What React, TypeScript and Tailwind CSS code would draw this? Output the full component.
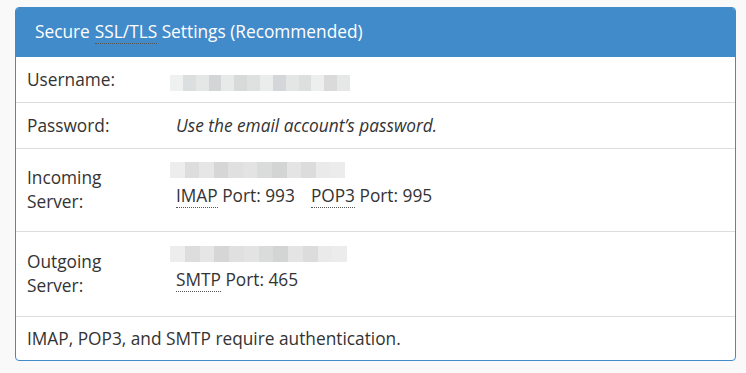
import React from "react";

const blurA = ["#eef0f0", "#d9dcdc", "#e3e4e4", "#cfd2d2", "#e6e7e7", "#d4d6d6", "#dcdede", "#e9eaea", "#d0d3d6", "#e2e3e3", "#dadcdc", "#eceded", "#d6d6d6", "#e4e5e5"];
const blurB = ["#ececec", "#dadada", "#e4e4e4", "#d2d2d2", "#dddddd", "#e0e0e0", "#d6d8d8", "#cfd1d1", "#e2e2e2", "#d9d9d9", "#e8e8e8", "#eaeaea"];

// pixelated stand-in for the redacted host names
function Blur({ colors, width }: { colors: string[]; width: number }) {
  return (
    <div className="flex h-[16px] opacity-90 -ml-[6px]" style={{ width }}>
      {colors.map((c, i) => (
        <div key={i} className="flex-1" style={{ backgroundColor: c }} />
      ))}
    </div>
  );
}

function Abbr({ children }: { children: React.ReactNode }) {
  return (
    <abbr className="no-underline border-b border-dotted border-[#555] cursor-help">
      {children}
    </abbr>
  );
}

function Row({ label, children, className = "" }: any) {
  return (
    <div className={"flex items-center border-t border-[#dddddd] " + className}>
      <div className="w-[160px] shrink-0 pl-[11px]">{label}</div>
      <div className="flex-1">{children}</div>
    </div>
  );
}

export default function App() {
  return (
    <div
      className="w-[746px] h-[373px] bg-[#f9f9f9] pt-[7px] pl-[15px] text-[#333333] text-[17.3px] leading-[24px]"
      style={{ fontFamily: '"Open Sans", "Noto Sans", sans-serif' }}
    >
      <div className="w-[721px] rounded-[4px] border border-[#428bca] bg-white overflow-hidden">
        {/* Header */}
        <div className="h-[50px] bg-[#428bca] text-white flex items-center pl-[19px] -mt-px">
          Secure <span className="ml-[5px]"><Abbr>SSL/TLS</Abbr></span>&nbsp;Settings (Recommended)
        </div>

        <Row label="Username:" className="h-[45px] border-t-0">
          <div className="pt-[6px]"><Blur colors={blurA} width={180} /></div>
        </Row>

        <Row label="Password:" className="h-[46px]">
          <i>Use the email account’s password.</i>
        </Row>

        <Row
          label={
            <>
              Incoming
              <br />
              Server:
            </>
          }
          className="h-[83px]"
        >
          <div className="flex flex-col pb-[10px]">
            <Blur colors={blurB} width={175} />
            <div className="mt-[6px]">
              <Abbr>IMAP</Abbr> Port: 993<span className="inline-block w-[16px]" />
              <Abbr>POP3</Abbr> Port: 995
            </div>
          </div>
        </Row>

        <Row
          label={
            <>
              Outgoing
              <br />
              Server:
            </>
          }
          className="h-[85px]"
        >
          <div className="flex flex-col pb-[10px]">
            <Blur colors={blurB} width={177} />
            <div className="mt-[6px]">
              <Abbr>SMTP</Abbr> Port: 465
            </div>
          </div>
        </Row>

        <div className="h-[44px] border-t border-[#dddddd] flex items-center pl-[11px]">
          IMAP, POP3, and SMTP require authentication.
        </div>
      </div>
    </div>
  );
}
